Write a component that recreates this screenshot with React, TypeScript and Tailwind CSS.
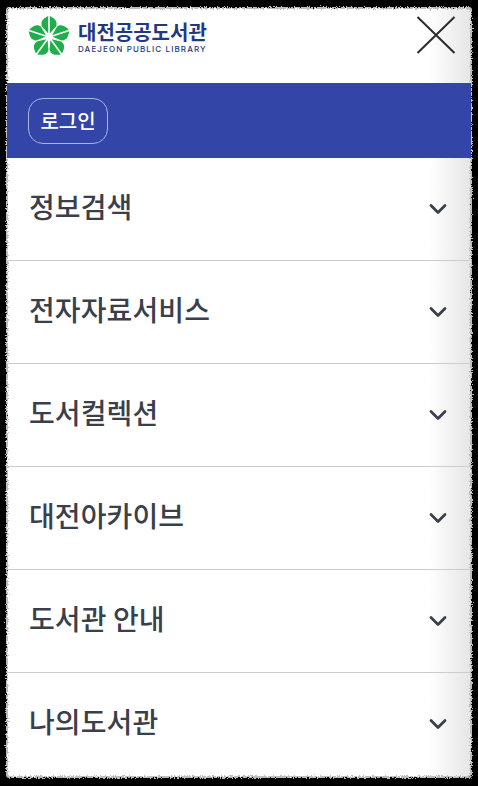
import { ChevronDown } from 'lucide-react'

const MENU = ['정보검색', '전자자료서비스', '도서컬렉션', '대전아카이브', '도서관 안내', '나의도서관']

function Logo() {
  return (
    <svg width="42" height="40" viewBox="-21 -21 42 40" className="shrink-0">
      {[0, 72, 144, 216, 288].map((deg) => (
        <g key={deg} transform={`rotate(${deg})`} fill="#1fae4b">
          <path d="M-0.8 -3.5 L-0.8 -21 C-4.5 -19 -9 -16.5 -7.2 -10.8 Z" />
          <path d="M0.8 -3.5 L0.8 -21 C4.5 -19 9 -16.5 7.2 -10.8 Z" />
        </g>
      ))}
    </svg>
  )
}

export default function App() {
  return (
    <div className="h-[786px] w-[478px] overflow-hidden bg-black pt-2 px-[7px] pb-[9px] font-['Noto_Sans_CJK_KR','Noto_Sans',sans-serif]">
      <svg className="absolute size-0">
        <filter id="rough" x="-2%" y="-2%" width="104%" height="104%">
          <feTurbulence type="fractalNoise" baseFrequency="0.7" numOctaves="2" seed="4" />
          <feDisplacementMap in="SourceGraphic" scale="5" />
        </filter>
      </svg>
      <div className="relative h-full">
        {/* torn edge of the panel */}
        <div className="absolute -inset-px rounded-[3px] border-2 border-[#bdbdbd] bg-[linear-gradient(to_right,#ffffff_91%,#e6e6e6_100%)] [filter:url(#rough)]" />

        <div className="relative">
          {/* Header */}
          <div className="flex h-[75px] items-start justify-between pl-[21px] pr-[15px]">
            <div className="flex items-center gap-[8px] pt-2">
              <Logo />
              <div className="flex flex-col pt-[1px]">
                <span className="text-[20px] leading-[24px] font-semibold whitespace-nowrap text-[#23387f]">대전공공도서관</span>
                <span className="font-['Inter',sans-serif] text-[8px] leading-[10px] font-medium tracking-[1.12px] whitespace-nowrap text-[#23387f]">DAEJEON PUBLIC LIBRARY</span>
              </div>
            </div>
            <svg width="40" height="38" viewBox="0 0 40 38" className="mt-2 shrink-0" fill="none" stroke="#2b2b2b" strokeWidth="2">
              <path d="M1.5 1 L38.5 37 M38.5 1 L1.5 37" />
            </svg>
          </div>

          {/* Login bar */}
          <div className="flex h-[75px] items-center bg-[#3346a8] pl-[21px]">
            <button className="h-[46px] w-20 rounded-[15px] border border-[#a9b3e6] text-[20px] font-medium text-white">로그인</button>
          </div>

          {/* Menu */}
          <ul>
            {MENU.map((label, i) => (
              <li
                key={label}
                className={`flex items-center justify-between pb-[7px] pl-[22px] pr-[19px] text-[#3a404b] ${i === 0 ? 'h-[102px]' : 'h-[103px] border-t border-[#cccccc]'}`}
              >
                <span className="text-[28px] font-medium tracking-[0.1px] whitespace-nowrap">{label}</span>
                <ChevronDown size={28} strokeWidth={2.4} className="mt-[6px]" />
              </li>
            ))}
          </ul>
        </div>
      </div>
    </div>
  )
}
